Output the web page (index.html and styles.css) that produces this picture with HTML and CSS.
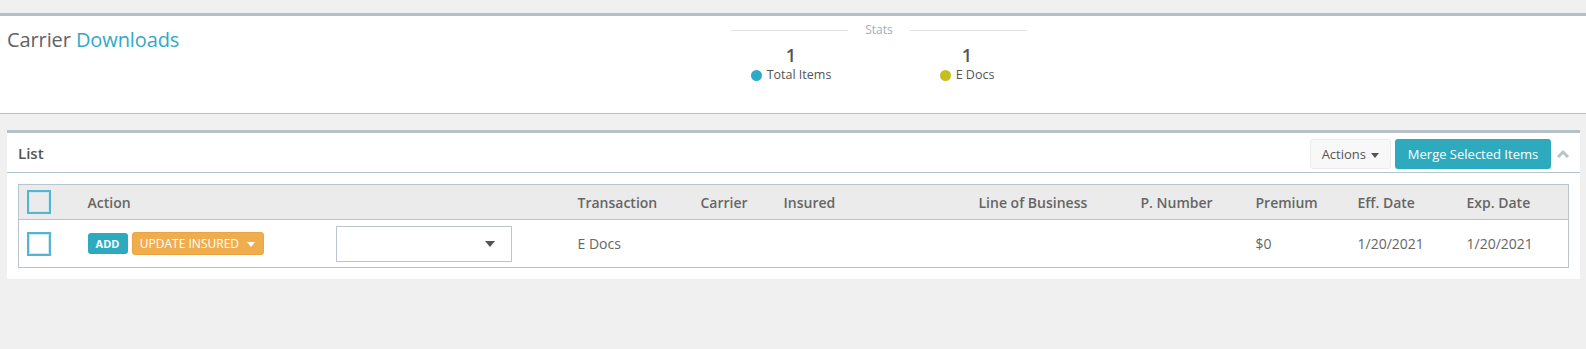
FILE: index.html
```html
<!DOCTYPE html>
<html lang="en">

<head>
    <meta charset="UTF-8">
    <meta name="viewport" content="width=device-width, initial-scale=1.0">
    <title>Carrier Downloads</title>
    <link rel="stylesheet" href="styles.css">
</head>

<body>
    <header class="page-head">
        <h1 class="page-title">Carrier <span>Downloads</span></h1>
        <div class="stats">
            <div class="stats-label"><span>Stats</span></div>
            <div class="stats-row">
                <div class="stat">
                    <div class="stat-value">1</div>
                    <div class="stat-name"><i class="dot dot-total"></i>Total Items</div>
                </div>
                <div class="stat">
                    <div class="stat-value">1</div>
                    <div class="stat-name"><i class="dot dot-edocs"></i>E Docs</div>
                </div>
            </div>
        </div>
    </header>

    <section class="panel">
        <div class="panel-head">
            <h2>List</h2>
            <div class="panel-tools">
                <button class="btn btn-light">Actions <span class="caret"></span></button>
                <button class="btn btn-teal">Merge Selected Items</button>
                <svg class="collapse-icon" width="14" height="10" viewBox="0 0 14 10">
                    <polyline points="2,8 7,3 12,8" fill="none" stroke="#b9c3cb" stroke-width="3" />
                </svg>
            </div>
        </div>
        <div class="panel-body">
            <table class="grid">
                <colgroup>
                    <col style="width: 61px">
                    <col style="width: 248px">
                    <col style="width: 242px">
                    <col style="width: 123px">
                    <col style="width: 83px">
                    <col style="width: 195px">
                    <col style="width: 162px">
                    <col style="width: 115px">
                    <col style="width: 102px">
                    <col style="width: 109px">
                    <col>
                </colgroup>
                <thead>
                    <tr>
                        <th><span class="check"></span></th>
                        <th>Action</th>
                        <th></th>
                        <th>Transaction</th>
                        <th>Carrier</th>
                        <th>Insured</th>
                        <th>Line of Business</th>
                        <th>P. Number</th>
                        <th>Premium</th>
                        <th>Eff. Date</th>
                        <th>Exp. Date</th>
                    </tr>
                </thead>
                <tbody>
                    <tr>
                        <td><span class="check"></span></td>
                        <td>
                            <div class="row-actions">
                                <button class="btn btn-add">ADD</button>
                                <button class="btn btn-warn">UPDATE INSURED <span class="caret caret-white"></span></button>
                            </div>
                        </td>
                        <td>
                            <div class="select-box"><span class="caret caret-dark"></span></div>
                        </td>
                        <td>E Docs</td>
                        <td></td>
                        <td></td>
                        <td></td>
                        <td></td>
                        <td>$0</td>
                        <td>1/20/2021</td>
                        <td>1/20/2021</td>
                    </tr>
                </tbody>
            </table>
        </div>
    </section>
</body>

</html>
```

FILE: styles.css
```css
body {
    font-family: 'Open Sans', 'Liberation Sans', sans-serif;
    margin: 0;
    padding: 0;
    background-color: #f0f0f0;
    color: #666;
}

/* top header with stats */
.page-head {
    display: flex;
    margin-top: 13px;
    height: 97px;
    background-color: white;
    border-top: 3px solid #b5c0c8;
    border-bottom: 1px solid #b5c0c8;
}

.page-title {
    flex: 0 0 703px;
    box-sizing: border-box;
    margin: 0;
    padding: 13px 0 0 7px;
    font-size: 20px;
    line-height: 22px;
    font-weight: 400;
    letter-spacing: -0.1px;
    color: #5f6368;
}

.page-title span {
    color: #31a9c4;
}

.stats {
    width: 352px;
}

.stats-label {
    display: flex;
    align-items: center;
    gap: 17px;
    margin: 6px 28px 0;
    font-size: 12px;
    line-height: 16px;
    color: #a5aeb8;
}

.stats-label::before,
.stats-label::after {
    content: '';
    flex: 1;
    height: 1px;
    background-color: #e2e2e2;
}

.stats-row {
    display: flex;
    margin-top: 6px;
}

.stat {
    flex: 1;
    text-align: center;
    color: #555;
}

.stat-value {
    font-size: 18px;
    line-height: 22px;
    font-weight: 600;
}

.stat-name {
    display: flex;
    align-items: center;
    justify-content: center;
    gap: 5px;
    font-size: 12.5px;
    line-height: 18px;
}

.dot {
    display: inline-block;
    width: 11px;
    height: 11px;
    border-radius: 50%;
}

.dot-total {
    background-color: #2eaac6;
}

.dot-edocs {
    background-color: #c6bf1c;
}

/* list panel */
.panel {
    margin: 16px 6px 0 7px;
    background-color: white;
    border-top: 3px solid #b5c0c8;
}

.panel-head {
    display: flex;
    align-items: center;
    justify-content: space-between;
    height: 40px;
    box-sizing: border-box;
    padding: 3px 10px 0 11px;
    border-bottom: 1px solid #b5c3cc;
}

.panel-head h2 {
    margin: 0 0 3px;
    font-size: 15px;
    font-weight: 600;
    color: #555;
}

.panel-tools {
    display: flex;
    align-items: center;
    gap: 4px;
}

.btn {
    font-family: inherit;
    border: none;
    border-radius: 3px;
    cursor: pointer;
}

.btn-light {
    height: 30px;
    width: 81px;
    padding: 0;
    background-color: #f8f8f8;
    border: 1px solid #ececec;
    color: #555;
    font-size: 13px;
}

.btn-teal {
    height: 30px;
    width: 156px;
    padding: 0;
    background-color: #2eaabf;
    color: white;
    font-size: 13px;
}

.collapse-icon {
    margin-left: 1px;
}

.caret {
    display: inline-block;
    width: 0;
    height: 0;
    margin-left: 2px;
    vertical-align: middle;
    border-left: 4px solid transparent;
    border-right: 4px solid transparent;
    border-top: 5px solid #555;
}

.caret-white {
    border-top-color: white;
    margin-left: 5px;
}

.panel-body {
    padding: 11px;
}

/* table */
.grid {
    width: 100%;
    table-layout: fixed;
    border-collapse: collapse;
    border: 1px solid #b8c5cd;
    font-size: 14px;
}

.grid th {
    height: 34px;
    padding: 0 8px;
    text-align: left;
    font-weight: 600;
    color: #666;
    background-color: #ebebeb;
    border-bottom: 1px solid #b8c5cd;
}

.grid td {
    height: 47px;
    padding: 0 8px;
    color: #666;
}

.check {
    display: block;
    width: 24px;
    height: 24px;
    box-sizing: border-box;
    border: 2px solid #55b4d4;
    box-shadow: inset 0 0 0 1px #cfe9f2;
}

.row-actions {
    display: flex;
    align-items: center;
    gap: 4px;
}

.btn-add {
    height: 21px;
    width: 40px;
    padding: 0;
    background-color: #2eaabf;
    color: white;
    font-size: 11px;
    font-weight: 700;
}

.btn-warn {
    height: 23px;
    width: 132px;
    padding: 0;
    background-color: #f0ad4e;
    border: 1px solid #eba43f;
    color: white;
    font-size: 12px;
}

.select-box {
    display: flex;
    align-items: center;
    justify-content: flex-end;
    width: 176px;
    height: 36px;
    box-sizing: border-box;
    padding-right: 16px;
    border: 1px solid #b9c6cf;
}

.caret-dark {
    border-top-color: #555;
    border-left-width: 5px;
    border-right-width: 5px;
    border-top-width: 6px;
}
```
